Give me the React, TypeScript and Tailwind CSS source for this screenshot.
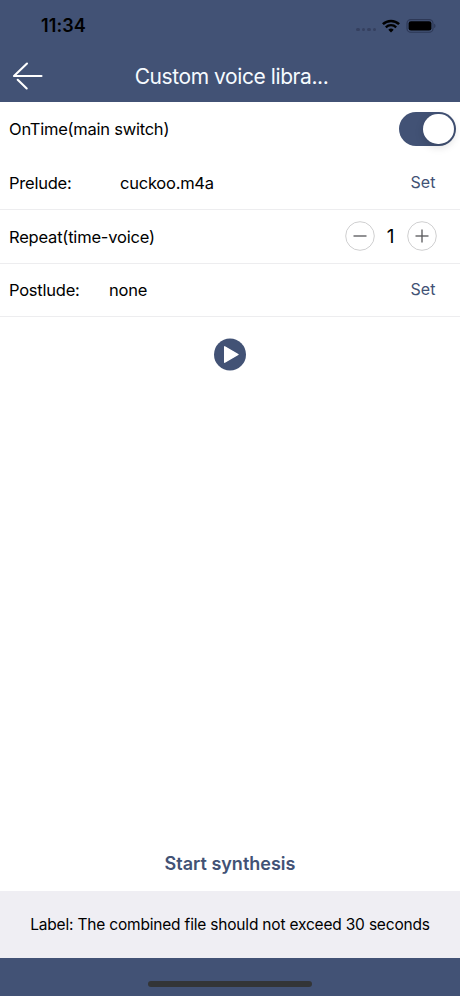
import React, { useState } from "react";

function StatusBar() {
  return (
    <div className="h-[50px] flex items-center justify-between pl-[41px] pr-[24px] pt-[1px] text-black">
      <span className="text-[18px] leading-5 tracking-[0.1px] pt-[1px] font-semibold">11:34</span>
      <div className="flex items-center">
        <div className="flex gap-[2px] mr-[6px] mt-[8px]">
          <span className="w-[3.5px] h-[3.5px] rounded-full bg-[#35405f]" />
          <span className="w-[3.5px] h-[3.5px] rounded-full bg-[#35405f]" />
          <span className="w-[3.5px] h-[3.5px] rounded-full bg-[#35405f]" />
          <span className="w-[3.5px] h-[3.5px] rounded-full bg-[#35405f]" />
        </div>
        <svg className="w-[18px] h-[14px] mr-[6px]" viewBox="0 0 18 14" fill="none" stroke="currentColor">
          <path d="M0.9 5.2a11.6 11.6 0 0 1 16.2 0" strokeWidth="2.5" />
          <path d="M3.8 8.3a7.5 7.5 0 0 1 10.4 0" strokeWidth="2.3" />
          <path d="M9 13.5L6.3 10.8a3.9 3.9 0 0 1 5.4 0z" fill="currentColor" stroke="none" />
        </svg>
        <svg className="w-[30px] h-[14px]" viewBox="0 0 30 14">
          <rect x="1" y="0.6" width="26" height="12.6" rx="3.8" fill="none" stroke="#2d3856" strokeWidth="1.1" />
          <rect x="2.6" y="2.2" width="22.8" height="9.4" rx="2.4" fill="currentColor" />
          <path d="M28.2 4.8c1.7.6 1.7 3.7 0 4.3z" fill="#2d3856" />
        </svg>
      </div>
    </div>
  );
}

function SetButton() {
  return <button className="w-[74px] pb-[1px] text-center tracking-normal text-[16px] text-[#425275]">Set</button>;
}

function RoundButton({ plus, onClick }: { plus?: boolean; onClick: () => void }) {
  return (
    <button onClick={onClick} className="w-[30px] h-[30px]">
      <svg viewBox="0 0 30 30" fill="none">
        <circle cx="15" cy="15" r="14.3" stroke="#c9c9cb" strokeWidth="0.9" />
        <path d="M8.5 15h13" stroke="#555558" strokeWidth="1.3" />
        {plus && <path d="M15 8.5v13" stroke="#555558" strokeWidth="1.3" />}
      </svg>
    </button>
  );
}

export default function App() {
  const [on, setOn] = useState(true);
  const [count, setCount] = useState(1);

  return (
    <div className="h-[996px] w-[460px] flex flex-col bg-white font-['Inter',sans-serif] text-black text-[16.5px] tracking-[-0.24px]">
      <header className="h-[102.4px] bg-[#425275]">
        <StatusBar />
        <div className="h-[52px] grid grid-cols-[56px_1fr_53px] items-center">
          <button className="pl-[12px]">
            <svg className="w-[31px] h-[28px]" viewBox="0 0 31 28" fill="none" stroke="white" strokeWidth="2.1" strokeLinecap="round">
              <path d="M15 1.5L2 14h27.5" strokeLinejoin="round" />
              <path d="M5.7 17.8L14.7 26.5" />
            </svg>
          </button>
          <h1 className="pt-[1px] text-center text-[21px] tracking-[-0.42px] text-[#f6fbff]">Custom voice libra...</h1>
        </div>
      </header>

      <div className="h-[53.6px] flex items-center justify-between pl-[9px] pr-[4.5px]">
        <span>OnTime(main switch)</span>
        <button
          role="switch"
          aria-checked={on}
          onClick={() => setOn(!on)}
          className={`w-[56.5px] h-[34.5px] rounded-full p-[2px] flex ${on ? "justify-end bg-[#425275]" : "justify-start bg-gray-200"}`}
        >
          <span className="w-[30.5px] h-[30.5px] rounded-full bg-white shadow-[0_3px_8px_rgba(0,0,0,0.15)]" />
        </button>
      </div>

      <div className="h-[54px] flex items-center pl-[9px] border-b border-[#ededef]">
        <span className="w-[111px] pt-[1px]">Prelude:</span>
        <span className="flex-1 pt-[1px]">cuckoo.m4a</span>
        <SetButton />
      </div>

      <div className="h-[54px] flex items-center justify-between pl-[9px] pr-[23.5px] border-b border-[#ededef]">
        <span className="pt-[1px] tracking-[-0.2px]">Repeat(time-voice)</span>
        <div className="flex items-center pb-[1px]">
          <RoundButton onClick={() => setCount(Math.max(1, count - 1))} />
          <span className="w-[32px] text-center text-[19px] pt-[2px]">{count}</span>
          <RoundButton plus onClick={() => setCount(count + 1)} />
        </div>
      </div>

      <div className="h-[53px] flex items-center pl-[9px] border-b border-[#ededef]">
        <span className="w-[100px]">Postlude:</span>
        <span className="flex-1">none</span>
        <SetButton />
      </div>

      <div className="flex-1 flex justify-center items-start pt-[21px]">
        <button>
          <svg className="w-[32px] h-[33px]" viewBox="0 0 32 33">
            <circle cx="16" cy="16.5" r="16" fill="#425275" />
            <path d="M10.7 8.8v15.4L24 16.5z" fill="white" stroke="white" strokeWidth="1.4" strokeLinejoin="round" />
          </svg>
        </button>
      </div>

      <button className="h-[54px] pb-[2px] text-[18px] tracking-normal font-semibold text-[#425275]">Start synthesis</button>
      <div className="h-[67px] flex items-center justify-center pt-[1px] bg-[#efeef3] text-[15.5px] tracking-[-0.19px]">
        Label: The combined file should not exceed 30 seconds
      </div>
      <footer className="h-[38px] flex justify-center items-end pb-[9px] bg-[#425275]">
        <div className="w-[164px] h-[6px] rounded-full bg-[#333537]" />
      </footer>
    </div>
  );
}
